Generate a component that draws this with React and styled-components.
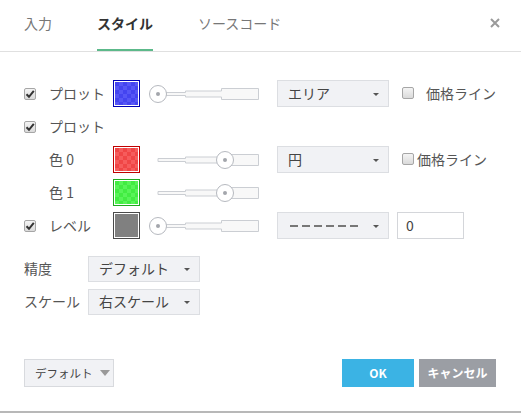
import React from 'react'
import styled, { createGlobalStyle } from 'styled-components'

const GlobalStyle = createGlobalStyle`
  html, body {
    margin: 0;
    padding: 0;
    background: #fff;
  }
  body {
    font-family: 'Noto Sans CJK JP', 'Noto Sans', 'Liberation Sans', sans-serif;
    font-size: 14px;
    color: #555;
  }
`

const Dialog = styled.div`
  width: 521px;
  height: 413px;
  box-sizing: border-box;
  border-bottom: 2px solid #b8b8b8;
  display: flex;
  flex-direction: column;
`

const Header = styled.div`
  height: 51px;
  border-bottom: 1px solid #e0e0e0;
  display: flex;
  align-items: stretch;
  padding: 0 21px 0 24px;
`

const Tab = styled.div`
  position: relative;
  display: flex;
  align-items: center;
  margin-right: 45px;
  font-size: 14px;
  color: ${({ active }) => (active ? '#333' : '#777')};
  font-weight: ${({ active }) => (active ? 700 : 400)};
  padding-bottom: 5px;

  &::after {
    content: '';
    position: absolute;
    left: 0;
    right: 0;
    bottom: 0;
    height: 2px;
    background: ${({ active }) => (active ? '#5cb98a' : 'transparent')};
  }
`

const Close = styled.div`
  margin-left: auto;
  display: flex;
  align-items: center;
  padding-bottom: 5px;
`

const Body = styled.div`
  padding: 28px 0 0 24px;
  display: flex;
  flex-direction: column;
`

const Row = styled.div`
  display: flex;
  align-items: center;
  height: ${({ h }) => h || 27}px;
  margin-bottom: ${({ gap }) => (gap === undefined ? 6 : gap)}px;
`

const CheckCell = styled.div`
  width: 25px;
  display: flex;
  align-items: center;
`

const Label = styled.div`
  width: ${({ w }) => w || 64}px;
  color: #555;
  white-space: nowrap;
  padding-bottom: 2px;
`

const Box = styled.span`
  width: 10px;
  height: 10px;
  border: 1px solid #a6a6a6;
  border-radius: 2px;
  background: linear-gradient(#f4f4f4, #dadada);
  display: inline-flex;
  align-items: center;
  justify-content: center;
  flex: none;
`

const Checkbox = ({ checked }) => (
  <Box>
    {checked && (
      <svg width="10" height="10" viewBox="0 0 10 10">
        <path d="M1.5 5.2 L4 7.8 L8.8 1.8" fill="none" stroke="#333" strokeWidth="2" />
      </svg>
    )}
  </Box>
)

const Swatch = styled.div`
  border: 1px solid ${({ edge }) => edge};
  padding: 1px;
  box-sizing: border-box;
  width: 27px;
  height: 27px;
  background: #fff;
  flex: none;

  &::before {
    content: '';
    display: block;
    width: 100%;
    height: 100%;
    background-color: ${({ fill }) => fill};
    background-image: ${({ light }) =>
      light
        ? `conic-gradient(${light} 25%, transparent 0 50%, ${light} 0 75%, transparent 0)`
        : 'none'};
    background-size: 8px 8px;
  }
`

const SliderWrap = styled.div`
  margin-left: 9px;
  width: 110px;
  height: 22px;
  flex: none;
`

const Slider = ({ pos }) => (
  <SliderWrap>
    <svg width="110" height="22" viewBox="0 0 110 22">
      <path
        d="M9 9.5 H36.5 V8 H72.5 V5.5 H109.5 V16.5 H72.5 V14 H36.5 V12.5 H9 Z"
        fill="#f8f8f8"
        stroke="#cbced3"
      />
      <circle cx={pos} cy="11" r="8.5" fill="#fff" stroke="#b6b9bf" />
      <circle cx={pos} cy="11" r="2" fill="#a3a6ac" />
    </svg>
  </SliderWrap>
)

const Select = styled.div`
  margin-left: ${({ ml }) => (ml === undefined ? 18 : ml)}px;
  width: ${({ w }) => w || 112}px;
  height: ${({ h }) => h || 27}px;
  box-sizing: border-box;
  background: #f1f2f5;
  border: 1px solid #dcdee2;
  display: flex;
  align-items: center;
  padding: 0 9px 0 10px;
  color: #444;
  flex: none;
`

const SelectText = styled.span`
  flex: 1;
  white-space: nowrap;
  padding-bottom: 2px;
`

const Caret = styled.span`
  width: 0;
  height: 0;
  border-left: 3px solid transparent;
  border-right: 3px solid transparent;
  border-top: 3px solid #555;
  margin-top: 1px;
`

const Dashes = styled.span`
  flex: 1;
  display: flex;
  align-items: center;
`

const PriceLine = styled.div`
  margin-left: 13px;
  display: flex;
  align-items: center;
  gap: ${({ gap }) => gap}px;
  white-space: nowrap;
  color: #555;
  padding-bottom: 2px;
`

const NumberInput = styled.div`
  margin-left: 8px;
  width: 67px;
  height: 27px;
  box-sizing: border-box;
  border: 1px solid #d4d6da;
  background: #fff;
  display: flex;
  align-items: center;
  padding: 0 0 2px 8px;
  color: #444;
`

const Footer = styled.div`
  margin-top: auto;
  margin-bottom: 24px;
  padding: 0 25px 0 24px;
  display: flex;
  align-items: center;
`

const DefaultButton = styled.div`
  width: 90px;
  height: 28px;
  box-sizing: border-box;
  background: #f1f2f5;
  border: 1px solid #d8dade;
  display: flex;
  align-items: center;
  padding: 0 0 1px 10px;
  gap: 7px;
  color: #444;
  font-size: 11.5px;
  white-space: nowrap;
`

const BigCaret = styled.span`
  width: 0;
  height: 0;
  border-left: 5px solid transparent;
  border-right: 5px solid transparent;
  border-top: 6px solid #999;
  flex: none;
`

const Action = styled.div`
  height: 28px;
  width: ${({ w }) => w}px;
  margin-left: ${({ ml }) => ml || 0}px;
  background: ${({ bg }) => bg};
  color: #fff;
  font-weight: 700;
  font-size: 12px;
  display: flex;
  align-items: center;
  justify-content: center;
  padding-bottom: 1px;
  box-sizing: border-box;
`

const Spacer = styled.div`
  flex: 1;
`

export default function App() {
  return (
    <>
      <GlobalStyle />
      <Dialog>
        <Header>
          <Tab>入力</Tab>
          <Tab active>スタイル</Tab>
          <Tab>ソースコード</Tab>
          <Close>
            <svg width="10" height="10" viewBox="0 0 10 10">
              <path d="M1 1 L9 9 M9 1 L1 9" stroke="#9a9a9a" strokeWidth="2" />
            </svg>
          </Close>
        </Header>

        <Body>
          <Row>
            <CheckCell>
              <Checkbox checked />
            </CheckCell>
            <Label>プロット</Label>
            <Swatch edge="#0000b4" fill="#4444f0" light="#5656f6" />
            <Slider pos={9} />
            <Select>
              <SelectText>エリア</SelectText>
              <Caret />
            </Select>
            <PriceLine gap={12}>
              <Checkbox />
              価格ライン
            </PriceLine>
          </Row>

          <Row>
            <CheckCell>
              <Checkbox checked />
            </CheckCell>
            <Label>プロット</Label>
          </Row>

          <Row>
            <CheckCell />
            <Label>色 0</Label>
            <Swatch edge="#c00000" fill="#f04646" light="#f65c5c" />
            <Slider pos={76} />
            <Select>
              <SelectText>円</SelectText>
              <Caret />
            </Select>
            <PriceLine gap={3}>
              <Checkbox />
              価格ライン
            </PriceLine>
          </Row>

          <Row>
            <CheckCell />
            <Label>色 1</Label>
            <Swatch edge="#1fa81f" fill="#42ec42" light="#58f458" />
            <Slider pos={76} />
          </Row>

          <Row gap={17}>
            <CheckCell>
              <Checkbox checked />
            </CheckCell>
            <Label>レベル</Label>
            <Swatch edge="#4a4a4a" fill="#808080" />
            <Slider pos={9} />
            <Select>
              <Dashes>
                <svg width="70" height="4" viewBox="0 0 70 4">
                  <line x1="2" y1="2" x2="70" y2="2" stroke="#777" strokeWidth="2" strokeDasharray="8 4" />
                </svg>
              </Dashes>
              <Caret />
            </Select>
            <NumberInput>0</NumberInput>
          </Row>

          <Row h={26} gap={7}>
            <Label>精度</Label>
            <Select ml={0} h={26}>
              <SelectText>デフォルト</SelectText>
              <Caret />
            </Select>
          </Row>

          <Row h={26} gap={0}>
            <Label>スケール</Label>
            <Select ml={0} h={26}>
              <SelectText>右スケール</SelectText>
              <Caret />
            </Select>
          </Row>
        </Body>

        <Footer>
          <DefaultButton>
            デフォルト
            <BigCaret />
          </DefaultButton>
          <Spacer />
          <Action w={72} bg="#3bb3e4">OK</Action>
          <Action w={77} ml={5} bg="#9b9ea4">キャンセル</Action>
        </Footer>
      </Dialog>
    </>
  )
}
